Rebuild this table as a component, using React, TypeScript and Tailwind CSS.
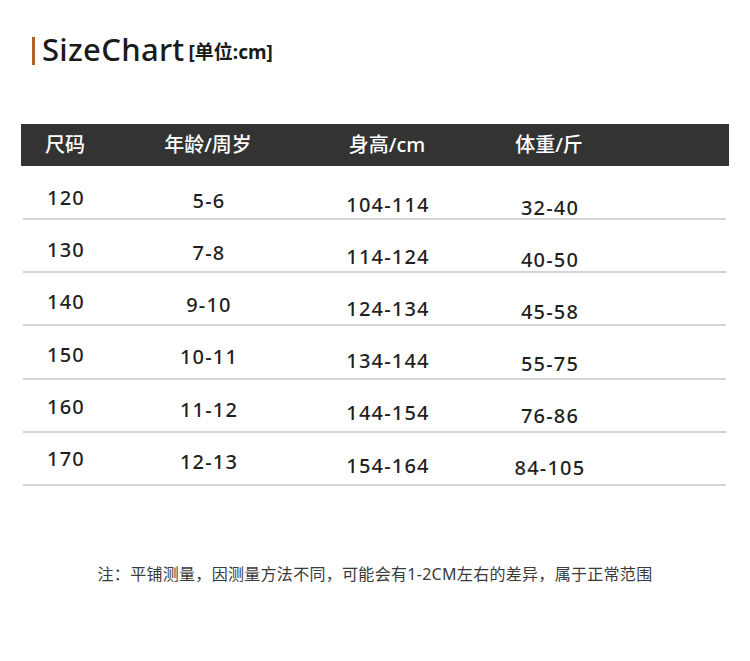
import React from 'react';

// each cell sits a little lower than the one on its left, as in the source image
const rows = [
  { h: 'h-[54px]', pt: ['pt-[19px]', 'pt-[22px]', 'pt-[26px]', 'pt-[29px]'], c: ['120', '5-6', '104-114', '32-40'] },
  { h: 'h-[53px]', pt: ['pt-[17px]', 'pt-[20px]', 'pt-[24px]', 'pt-[27px]'], c: ['130', '7-8', '114-124', '40-50'] },
  { h: 'h-[53px]', pt: ['pt-[16px]', 'pt-[19px]', 'pt-[23px]', 'pt-[26px]'], c: ['140', '9-10', '124-134', '45-58'] },
  { h: 'h-[54px]', pt: ['pt-[16px]', 'pt-[18px]', 'pt-[22px]', 'pt-[25px]'], c: ['150', '10-11', '134-144', '55-75'] },
  { h: 'h-[53px]', pt: ['pt-[14px]', 'pt-[17px]', 'pt-[20px]', 'pt-[23px]'], c: ['160', '11-12', '144-154', '76-86'] },
  { h: 'h-[53px]', pt: ['pt-[13px]', 'pt-[16px]', 'pt-[20px]', 'pt-[22px]'], c: ['170', '12-13', '154-164', '84-105'] },
];

const cols = 'grid grid-cols-[88px_198px_160px_164px_1fr]';

export default function App() {
  return (
    <div
      className="w-[750px] h-[661px] bg-white flex flex-col text-[#222]"
      style={{ fontFamily: '"Noto Sans", "Noto Sans CJK SC", sans-serif' }}
    >
      {/* Title */}
      <div className="flex items-end pt-[37px] pl-[32px] h-[65px]">
        <div className="w-[3px] h-[28px] bg-[#a9642c]" />
        <span className="ml-[7px] text-[31px] leading-[32px] font-medium text-[#1a1a1a] tracking-[0.3px]">SizeChart</span>
        <span className="ml-[4px] mb-[2px] text-[19px] leading-[22px] font-bold text-[#1a1a1a]">[单位:cm]</span>
      </div>

      {/* Table */}
      <div className="mt-[59px] ml-[21px] w-[708px]">
        <div className={`${cols} h-[42px] items-center bg-[#333333] text-[20px] font-medium text-white`}>
          <div className="text-center">尺码</div>
          <div className="text-center">年龄/周岁</div>
          <div className="text-center">身高/cm</div>
          <div className="text-center">体重/斤</div>
          <div />
        </div>
        {rows.map((r) => (
          <div
            key={r.c[0]}
            className={`${cols} ${r.h} mr-[3px] ml-[2px] border-b-2 border-[#d4d4d4] text-[20px] leading-[26px] font-medium tracking-[1.2px] text-[#1f1f1f]`}
          >
            {r.c.map((v, i) => (
              <div key={i} className={`text-center -ml-[2px] ${r.pt[i]}`}>
                {v}
              </div>
            ))}
            <div />
          </div>
        ))}
      </div>

      {/* Note */}
      <div className="mt-[77px] text-center text-[16px] leading-[22px] tracking-[0.3px] text-[#3a3a3a]">
        注：平铺测量，因测量方法不同，可能会有1-2CM左右的差异，属于正常范围
      </div>
    </div>
  );
}
